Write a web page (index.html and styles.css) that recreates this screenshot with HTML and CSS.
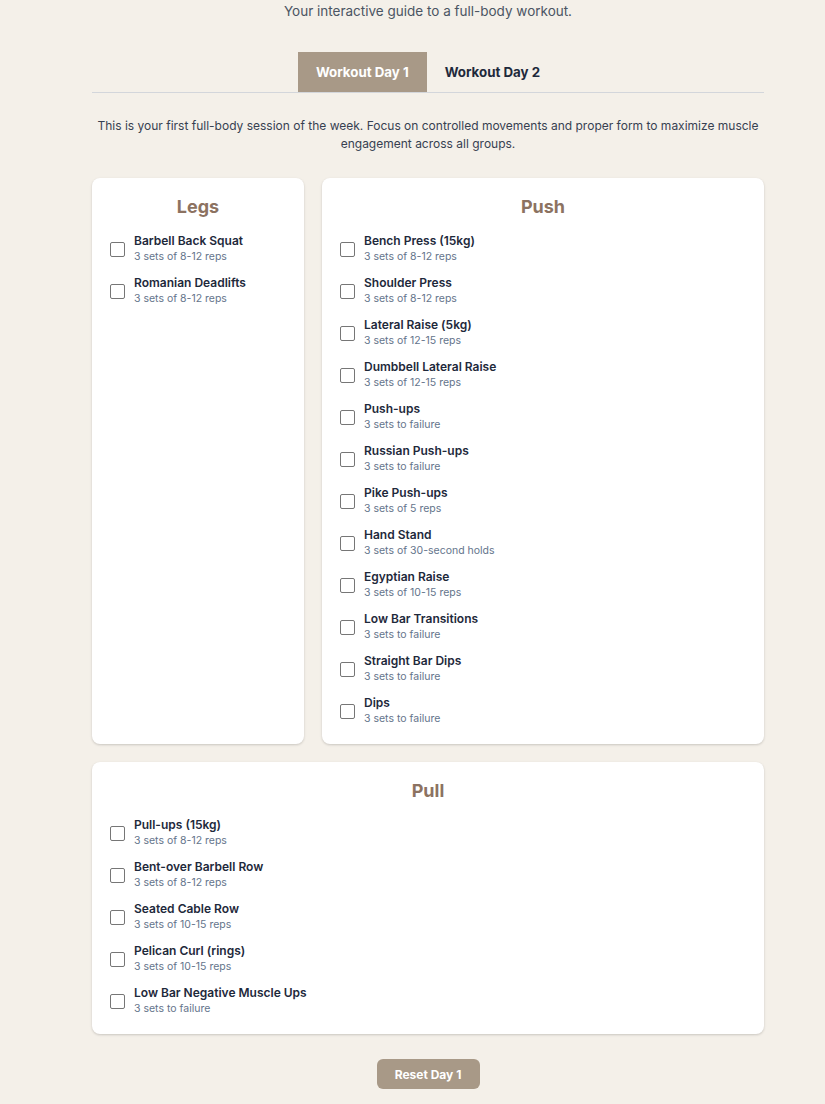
FILE: index.html
```html
<!DOCTYPE html>
<html lang="en">
<head>
<meta charset="utf-8">
<title>Workout Guide</title>
<link rel="stylesheet" href="styles.css">
</head>
<body>
<main class="page">
  <p class="subtitle">Your interactive guide to a full-body workout.</p>

  <nav class="tabs">
    <button class="tab tab-active">Workout Day 1</button>
    <button class="tab">Workout Day 2</button>
  </nav>

  <p class="intro">This is your first full-body session of the week. Focus on controlled movements and proper form to maximize muscle engagement across all groups.</p>

  <section class="grid">
    <div class="card">
      <h2 class="card-title">Legs</h2>
      <ul class="list">
        <li class="item"><span class="box"></span><div><div class="name">Barbell Back Squat</div><div class="detail">3 sets of 8-12 reps</div></div></li>
        <li class="item"><span class="box"></span><div><div class="name">Romanian Deadlifts</div><div class="detail">3 sets of 8-12 reps</div></div></li>
      </ul>
    </div>

    <div class="card card-wide">
      <h2 class="card-title">Push</h2>
      <ul class="list">
        <li class="item"><span class="box"></span><div><div class="name">Bench Press (15kg)</div><div class="detail">3 sets of 8-12 reps</div></div></li>
        <li class="item"><span class="box"></span><div><div class="name">Shoulder Press</div><div class="detail">3 sets of 8-12 reps</div></div></li>
        <li class="item"><span class="box"></span><div><div class="name">Lateral Raise (5kg)</div><div class="detail">3 sets of 12-15 reps</div></div></li>
        <li class="item"><span class="box"></span><div><div class="name">Dumbbell Lateral Raise</div><div class="detail">3 sets of 12-15 reps</div></div></li>
        <li class="item"><span class="box"></span><div><div class="name">Push-ups</div><div class="detail">3 sets to failure</div></div></li>
        <li class="item"><span class="box"></span><div><div class="name">Russian Push-ups</div><div class="detail">3 sets to failure</div></div></li>
        <li class="item"><span class="box"></span><div><div class="name">Pike Push-ups</div><div class="detail">3 sets of 5 reps</div></div></li>
        <li class="item"><span class="box"></span><div><div class="name">Hand Stand</div><div class="detail">3 sets of 30-second holds</div></div></li>
        <li class="item"><span class="box"></span><div><div class="name">Egyptian Raise</div><div class="detail">3 sets of 10-15 reps</div></div></li>
        <li class="item"><span class="box"></span><div><div class="name">Low Bar Transitions</div><div class="detail">3 sets to failure</div></div></li>
        <li class="item"><span class="box"></span><div><div class="name">Straight Bar Dips</div><div class="detail">3 sets to failure</div></div></li>
        <li class="item"><span class="box"></span><div><div class="name">Dips</div><div class="detail">3 sets to failure</div></div></li>
      </ul>
    </div>

    <div class="card card-full">
      <h2 class="card-title">Pull</h2>
      <ul class="list">
        <li class="item"><span class="box"></span><div><div class="name">Pull-ups (15kg)</div><div class="detail">3 sets of 8-12 reps</div></div></li>
        <li class="item"><span class="box"></span><div><div class="name">Bent-over Barbell Row</div><div class="detail">3 sets of 8-12 reps</div></div></li>
        <li class="item"><span class="box"></span><div><div class="name">Seated Cable Row</div><div class="detail">3 sets of 10-15 reps</div></div></li>
        <li class="item"><span class="box"></span><div><div class="name">Pelican Curl (rings)</div><div class="detail">3 sets of 10-15 reps</div></div></li>
        <li class="item"><span class="box"></span><div><div class="name">Low Bar Negative Muscle Ups</div><div class="detail">3 sets to failure</div></div></li>
      </ul>
    </div>
  </section>

  <div class="actions">
    <button class="reset">Reset Day 1</button>
  </div>
</main>
</body>
</html>
```

FILE: styles.css
```css
* { box-sizing: border-box; }

html, body {
  margin: 0;
  padding: 0;
  background: #f4f0e9;
  font-family: Inter, "Noto Sans", sans-serif;
  color: #1f2937;
}

.page {
  width: 672px;
  margin-left: 92px;
  padding-top: 1px;
}

.subtitle {
  margin: 0;
  text-align: center;
  font-size: 13.5px;
  line-height: 20px;
  color: #4b5563;
}

.tabs {
  margin-top: 31px;
  display: flex;
  justify-content: center;
  border-bottom: 1px solid #d3d6db;
}

.tab {
  font-family: inherit;
  border: none;
  background: transparent;
  height: 40px;
  padding: 0 18px;
  font-size: 13.3px;
  font-weight: 700;
  color: #1e293b;
  cursor: pointer;
}

.tab-active {
  background: #a89987;
  color: #ffffff;
}

.intro {
  margin: 24px 0 0;
  text-align: center;
  font-size: 12px;
  line-height: 18px;
  color: #374151;
}

.grid {
  margin-top: 25px;
  display: grid;
  grid-template-columns: repeat(3, 1fr);
  gap: 18px;
}

.card {
  background: #ffffff;
  border-radius: 8px;
  box-shadow: 0 1px 3px rgba(0, 0, 0, 0.12), 0 1px 2px rgba(0, 0, 0, 0.06);
  padding: 18px 18px 17px;
}

.card-wide { grid-column: span 2; }
.card-full { grid-column: 1 / -1; }

.card-title {
  margin: 0 0 15px;
  text-align: center;
  font-size: 18px;
  line-height: 22px;
  font-weight: 700;
  color: #8c7261;
}

.list {
  list-style: none;
  margin: 0;
  padding: 0;
  display: flex;
  flex-direction: column;
  gap: 10px;
}

.item {
  display: flex;
  align-items: center;
  gap: 9px;
}

.box {
  width: 15px;
  height: 15px;
  flex: none;
  border: 1px solid #767676;
  border-radius: 2px;
  background: #fff;
}

.name {
  font-size: 12px;
  line-height: 15px;
  font-weight: 600;
  color: #1e293b;
}

.detail {
  font-size: 10.5px;
  line-height: 17px;
  color: #64748b;
}

.actions {
  display: flex;
  justify-content: center;
  margin-top: 25px;
  padding-bottom: 20px;
}

.reset {
  font-family: inherit;
  border: none;
  background: #a89987;
  color: #ffffff;
  font-size: 12px;
  font-weight: 700;
  height: 30px;
  width: 103px;
  border-radius: 6px;
  cursor: pointer;
}
```
